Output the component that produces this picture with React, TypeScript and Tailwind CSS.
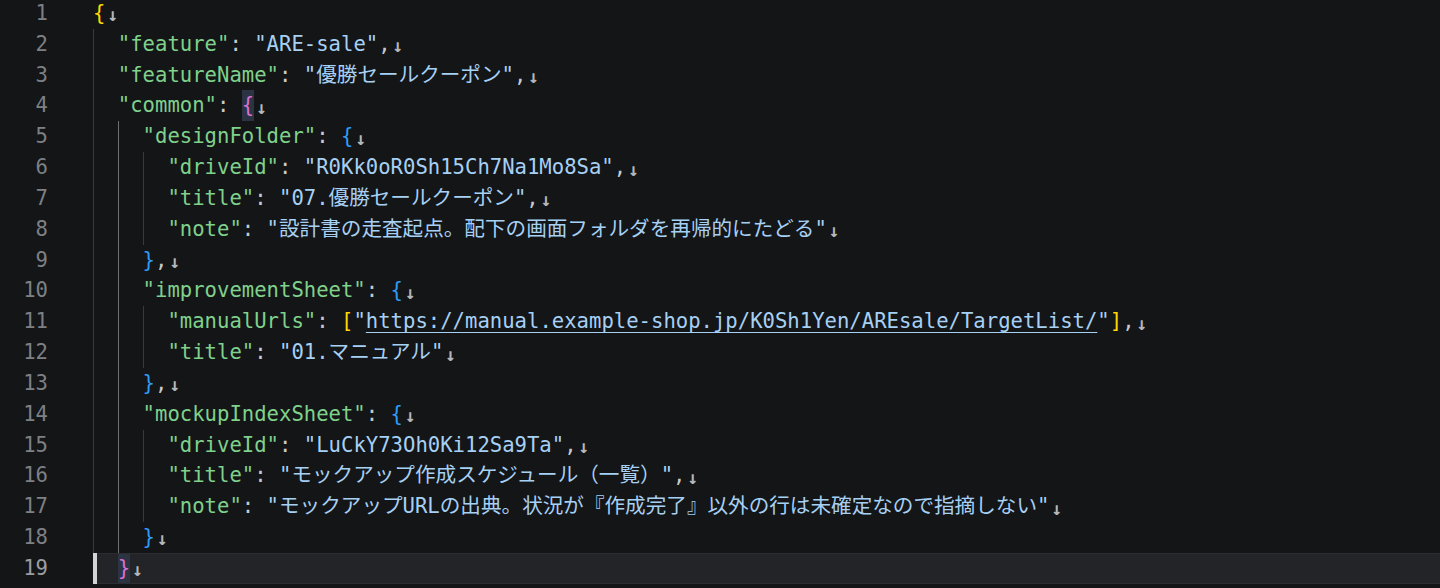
import clsx from "clsx";

type Tok = { t: string; c: string; box?: boolean; u?: boolean };
type Line = { indent: number; toks: Tok[] };

const KEY = "text-[#7fd18b]";
const STR = "text-[#a6d0f4]";
const PUN = "text-[#c8cbd0]";
const B1 = "text-[#ffd700]";
const B2 = "text-[#da70d6]";
const B3 = "text-[#2f9bf6]";

const k = (t: string): Tok => ({ t: `"${t}"`, c: KEY });
const s = (t: string): Tok => ({ t: `"${t}"`, c: STR });
const p = (t: string): Tok => ({ t, c: PUN });

const lines: Line[] = [
  { indent: 0, toks: [{ t: "{", c: B1 }] },
  { indent: 1, toks: [k("feature"), p(": "), s("ARE-sale"), p(",")] },
  { indent: 1, toks: [k("featureName"), p(": "), s("優勝セールクーポン"), p(",")] },
  { indent: 1, toks: [k("common"), p(": "), { t: "{", c: B2, box: true }] },
  { indent: 2, toks: [k("designFolder"), p(": "), { t: "{", c: B3 }] },
  { indent: 3, toks: [k("driveId"), p(": "), s("R0Kk0oR0Sh15Ch7Na1Mo8Sa"), p(",")] },
  { indent: 3, toks: [k("title"), p(": "), s("07.優勝セールクーポン"), p(",")] },
  {
    indent: 3,
    toks: [k("note"), p(": "), s("設計書の走査起点。配下の画面フォルダを再帰的にたどる")],
  },
  { indent: 2, toks: [{ t: "}", c: B3 }, p(",")] },
  { indent: 2, toks: [k("improvementSheet"), p(": "), { t: "{", c: B3 }] },
  {
    indent: 3,
    toks: [
      k("manualUrls"),
      p(": "),
      { t: "[", c: B1 },
      { t: '"', c: STR },
      { t: "https://manual.example-shop.jp/K0Sh1Yen/AREsale/TargetList/", c: STR, u: true },
      { t: '"', c: STR },
      { t: "]", c: B1 },
      p(","),
    ],
  },
  { indent: 3, toks: [k("title"), p(": "), s("01.マニュアル")] },
  { indent: 2, toks: [{ t: "}", c: B3 }, p(",")] },
  { indent: 2, toks: [k("mockupIndexSheet"), p(": "), { t: "{", c: B3 }] },
  { indent: 3, toks: [k("driveId"), p(": "), s("LuCkY73Oh0Ki12Sa9Ta"), p(",")] },
  { indent: 3, toks: [k("title"), p(": "), s("モックアップ作成スケジュール（一覧）"), p(",")] },
  {
    indent: 3,
    toks: [
      k("note"),
      p(": "),
      s("モックアップURLの出典。状況が『作成完了』以外の行は未確定なので指摘しない"),
    ],
  },
  { indent: 2, toks: [{ t: "}", c: B3 }] },
  { indent: 1, toks: [{ t: "}", c: B2, box: true }] },
];

const ACTIVE_LINE = 18;

function CodeLine({ line, idx }: { line: Line; idx: number }) {
  const active = idx === ACTIVE_LINE;
  return (
    <div className="flex h-[30.83px]">
      <div
        className={clsx(
          "w-[93px] shrink-0 pr-[45px] text-right leading-[30.83px]",
          active ? "text-[#9a9da2]" : "text-[#7d8085]"
        )}
      >
        {idx + 1}
      </div>
      <div
        className={clsx(
          "relative flex flex-1 items-stretch whitespace-pre",
          active && "border-y border-[#2c2d31] bg-[#232427]"
        )}
      >
        {/* cursor */}
        {active && <div className="absolute -top-px -bottom-px left-0 w-[4px] bg-[#d4d4d4]" />}
        {Array.from({ length: line.indent }).map((_, i) => (
          <span
            key={i}
            className={clsx(
              "w-[24.8px] shrink-0",
              !active &&
                (i === 1 && idx >= 4 && idx <= 17
                  ? "border-l border-[#6c6e72]"
                  : "border-l border-[#393a3d]")
            )}
          />
        ))}
        <div className="flex items-stretch">
          {line.toks.map((tok, i) => (
            <span
              key={i}
              className={clsx(
                "flex items-center",
                tok.c,
                tok.box && "bg-[#2c3342]",
                tok.u && "underline decoration-1 underline-offset-[4px]"
              )}
            >
              {tok.t}
            </span>
          ))}
          <span className="flex items-center pl-[2px] pt-[3px] text-[18px] font-bold text-[#b4b7bc]">↓</span>
        </div>
      </div>
    </div>
  );
}

export default function App() {
  return (
    <div className="h-[588px] w-[1440px] overflow-hidden bg-[#141517]">
      <div className="-mt-[2px] text-[20.6px] font-['DejaVu_Sans_Mono','Noto_Sans_CJK_JP',monospace]">
        {lines.map((line, idx) => (
          <CodeLine key={idx} line={line} idx={idx} />
        ))}
      </div>
    </div>
  );
}
